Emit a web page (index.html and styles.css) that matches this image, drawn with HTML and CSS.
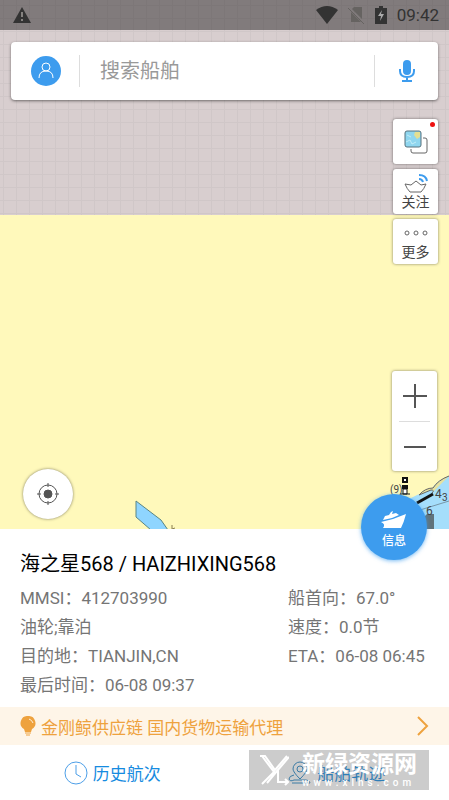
FILE: index.html
```html
<!DOCTYPE html>
<html lang="zh-CN">
<head>
    <meta charset="UTF-8">
    <meta name="viewport" content="width=device-width, initial-scale=1.0">
    <title>海之星568</title>
    <link rel="stylesheet" href="styles.css">
</head>
<body>
    <!-- Map Start -->
    <main class="map">
        <svg class="map-land river" width="40" height="29" viewBox="0 0 40 29">
            <path d="M1 1 L26 20 L33 30 H16 L1 17 Z" fill="#8fd5ff" stroke="#5a8583"/>
            <path d="M37 25 V29 L40 28" fill="none" stroke="#8a7f50"/>
        </svg>
        <svg class="map-land harbour" width="64" height="56" viewBox="0 0 64 56">
            <path d="M64 3 Q52 7 47 16 L32 22 L20 28 V56 H64 Z" fill="#a5defb"/>
            <path d="M64 3 Q53 7 48 15 Q40 15 34 22 L46 17 Q50 17 47 20" fill="#e6e2a0" stroke="#666"/>
            <path d="M32 30 L48 21" stroke="#111" stroke-width="3"/>
            <path d="M35 37 L64 28" stroke="#7797a8"/>
            <path d="M42 41 H49 V56 H35 V48 Z" fill="#60737b"/>
            <path d="M18 5 H22 V9 H18 Z" fill="#fff" stroke="#111" stroke-width="2"/>
            <path d="M17 12 H23 V16 H17 Z" fill="#111"/>
            <path d="M18 16 H22 V21 H18 Z M15 21 H25" fill="#fff" stroke="#111"/>
            <text x="5" y="20" class="depth">(9)</text>
            <text x="50" y="25" class="depth large">4</text>
            <text x="57" y="28" class="depth">3</text>
            <text x="41" y="42" class="depth large">6</text>
        </svg>

        <header class="status-bar">
            <svg width="20" height="18" viewBox="0 0 20 18">
                <path d="M10 1 L19 17 H1 Z" fill="#333"/>
                <path d="M10 6 V11 M10 13 V15" stroke="#858280" stroke-width="2"/>
            </svg>
            <div class="status-right">
                <svg width="22" height="18" viewBox="0 0 22 18">
                    <path d="M0 4 Q11 -4 22 4 L11 18 Z" fill="#333"/>
                </svg>
                <svg width="17" height="18" viewBox="0 0 17 18">
                    <path d="M6 1 H14 V13 L4 3 Z M3 6 L13 16 H3 Z" fill="#666361"/>
                    <path d="M0 2 L16 18" stroke="#666361" stroke-width="1"/>
                </svg>
                <svg width="12" height="18" viewBox="0 0 12 18">
                    <path d="M4 0 H8 V2 H12 V18 H0 V2 H4 Z" fill="#333"/>
                    <path d="M7 4 L3 10 H6 L5 15 L9 8 H6 Z" fill="#aaa"/>
                </svg>
                <span>09:42</span>
            </div>
        </header>

        <form class="search-box">
            <button type="button" class="avatar" aria-label="我的">
                <svg width="30" height="30" viewBox="0 0 30 30" fill="none" stroke="#fff">
                    <circle cx="15" cy="11" r="4"/>
                    <path d="M8 22 Q8 15 15 15 Q22 15 22 22"/>
                </svg>
            </button>
            <input type="text" aria-label="搜索船舶" placeholder="搜索船舶">
            <button type="button" class="voice" aria-label="语音搜索">
                <svg width="16" height="24" viewBox="0 0 16 24" fill="none" stroke="#3d9cee">
                    <rect x="4" y="1" width="8" height="15" rx="4" fill="#3d9cee" stroke="none"/>
                    <path d="M1 10 V12 Q1 18 8 18 Q15 18 15 12 V10 M8 18 V22 M3 22 H13" stroke-width="2"/>
                </svg>
            </button>
        </form>

        <nav class="side-tools">
            <button type="button" class="tool" aria-label="图层">
                <svg width="24" height="24" viewBox="0 0 24 24">
                    <path d="M19 8 H21 Q23 8 23 10 V21 Q23 23 21 23 H9 Q7 23 7 21 V19" fill="none" stroke="#666"/>
                    <rect x="1" y="1" width="16" height="16" rx="2" fill="#8fd6ef" stroke="#56717c"/>
                    <path d="M11 2 H16 V7 L13 9 L10 5 Z" fill="#e3df92"/>
                    <path d="M2 12 L6 10 L8 14 L12 12 M3 5 L7 7" fill="none" stroke="#c2edf8"/>
                </svg>
                <i class="dot"></i>
            </button>
            <button type="button" class="tool">
                <svg width="24" height="20" viewBox="0 0 24 20" fill="none" stroke="#666">
                    <path d="M1 11 L7 12 L12 8 L17 12 L22 11 Q20 16 17 19 H6 Q3 16 1 11 Z"/>
                    <path d="M15 6 Q18 6 19 9 M15 2 Q22 2 23 8" stroke="#3d9cee" stroke-width="2"/>
                </svg>
                <span>关注</span>
            </button>
            <button type="button" class="tool">
                <svg width="24" height="20" viewBox="0 0 24 20" fill="none" stroke="#666">
                    <circle cx="3" cy="10" r="2"/>
                    <circle cx="12" cy="10" r="2"/>
                    <circle cx="21" cy="10" r="2"/>
                </svg>
                <span>更多</span>
            </button>
        </nav>

        <div class="map-bottom">
            <button type="button" class="locate" aria-label="定位">
                <svg width="22" height="22" viewBox="0 0 22 22" fill="none" stroke="#555">
                    <circle cx="11" cy="11" r="9"/>
                    <circle cx="11" cy="11" r="4" fill="#555"/>
                    <path d="M11 0 V4 M11 18 V22 M0 11 H4 M18 11 H22"/>
                </svg>
            </button>
            <div class="zoom">
                <button type="button" aria-label="放大">
                    <svg width="24" height="24" viewBox="0 0 24 24"><path d="M0 12 H24 M12 0 V24" stroke="#555" stroke-width="2"/></svg>
                </button>
                <button type="button" aria-label="缩小">
                    <svg width="24" height="24" viewBox="0 0 24 24"><path d="M1 12 H23" stroke="#555" stroke-width="2"/></svg>
                </button>
            </div>
        </div>
    </main>
    <!-- Map End -->

    <!-- Ship panel Start -->
    <section class="panel">
        <button type="button" class="info-btn">
            <svg width="26" height="18" viewBox="0 0 26 18" fill="#fff">
                <path d="M0 11 L12 8 L25 3 Q23 11 20 17 H2 Q5 13 0 11 Z"/>
                <path d="M2 9 L4 5 L8 4 L10 1 L12 0 L11 3 L15 2 L18 4 L11 7 Z"/>
            </svg>
            <span>信息</span>
        </button>

        <h1>海之星568 / HAIZHIXING568</h1>
        <div class="details">
            <p>MMSI：412703990</p>
            <p>船首向：67.0°</p>
            <p>油轮;靠泊</p>
            <p>速度：0.0节</p>
            <p>目的地：TIANJIN,CN</p>
            <p>ETA：06-08 06:45</p>
            <p>最后时间：06-08 09:37</p>
        </div>

        <a class="notice" href="#">
            <svg width="16" height="20" viewBox="0 0 16 20">
                <path d="M8 0 A7 7 0 0 1 12 13 L11 16 H5 L4 13 A7 7 0 0 1 8 0 Z" fill="#eea23e"/>
                <path d="M5 17 H11 M6 19 H10" stroke="#eea23e"/>
                <path d="M9 3 Q12 4 13 7" fill="none" stroke="#fff0d8"/>
            </svg>
            <span>金刚鲸供应链 国内货物运输代理</span>
            <svg class="arrow" width="12" height="20" viewBox="0 0 12 20">
                <path d="M1 1 L10 10 L1 19" fill="none" stroke="#eea23e" stroke-width="2"/>
            </svg>
        </a>

        <nav class="tabs">
            <a href="#">
                <svg width="24" height="24" viewBox="0 0 24 24" fill="none" stroke="#4d9fe8">
                    <circle cx="12" cy="12" r="11"/>
                    <path d="M12 4 V13 L17 16"/>
                </svg>
                <span>历史航次</span>
            </a>
            <a href="#">
                <svg width="24" height="24" viewBox="0 0 24 24" fill="none" stroke="#2686c5">
                    <path d="M12 18 Q5 11 5 8 A7 7 0 0 1 19 8 Q19 11 12 18 Z"/>
                    <circle cx="12" cy="8" r="3"/>
                    <path d="M6 14 Q1 15 1 18 Q2 21 6 19 H18 Q22 19 22 22 H4"/>
                </svg>
                <span>船舶轨迹</span>
            </a>
        </nav>

        <div class="watermark">
            <svg width="30" height="32" viewBox="0 0 30 32" fill="none" stroke="#fff">
                <path d="M1 2 H6 L16 16 L28 2 M3 2 L15 18 L3 30 M30 3 L18 17 L8 29 M19 16 V28 H29 M26 25 L29 28 L26 31" stroke-width="2"/>
            </svg>
            <div>
                <strong>新绿资源网</strong>
                <small>www.xlhs.com</small>
            </div>
        </div>
    </section>
    <!-- Ship panel End -->
</body>
</html>
```

FILE: styles.css
```css
* {
    box-sizing: border-box;
    margin: 0;
    padding: 0;
    font-family: Roboto, "Noto Sans CJK SC", sans-serif;
}

body {
    display: flex;
    flex-direction: column;
    min-height: 100vh;
    background-color: #ffffff;
}

svg {
    display: block;
    flex-shrink: 0;
}

button {
    border: none;
    background: none;
    cursor: pointer;
}

a {
    text-decoration: none;
}

.map {
    flex: 1;
    display: flex;
    flex-direction: column;
    position: relative;
    background:
        linear-gradient(transparent 215px, #fff9bb 215px),
        repeating-linear-gradient(90deg, transparent 0 3px, #d0c7c8 3px 4px, transparent 4px 13px),
        repeating-linear-gradient(transparent 0 5px, #d0c7c8 5px 6px, transparent 6px 13px);
    background-color: #d8cecf;
}

.map-land {
    position: absolute;
    bottom: 0;
}

.river {
    left: 30%;
}

.harbour {
    right: 0;
}

.depth {
    font-size: 10px;
    fill: #444444;
}

.large {
    font-size: 12px;
}

.status-bar {
    display: flex;
    justify-content: space-between;
    align-items: center;
    height: 30px;
    padding: 0 10px 0 12px;
    background-color: rgba(0, 0, 0, 0.4);
}

.status-right {
    display: flex;
    align-items: center;
    gap: 10px;
    font-size: 17px;
    color: #333333;
}

.search-box {
    display: flex;
    align-items: center;
    height: 58px;
    margin: 12px 11px 0;
    padding: 0 0 0 20px;
    background-color: #ffffff;
    border-radius: 4px;
    box-shadow: 0 1px 3px rgba(0, 0, 0, 0.5);
}

.avatar {
    width: 30px;
    height: 30px;
    background-color: #3d9cee;
    border-radius: 50%;
}

.search-box input {
    flex: 1;
    min-width: 0;
    height: 32px;
    margin-left: 18px;
    padding-left: 20px;
    border: none;
    border-left: 1px solid #dddddd;
    outline: none;
    font-size: 20px;
}

.search-box input::placeholder {
    color: #999999;
}

.voice {
    display: flex;
    justify-content: center;
    align-items: center;
    width: 64px;
    height: 32px;
    border-left: 1px solid #dddddd;
}

.side-tools {
    display: flex;
    flex-direction: column;
    align-self: flex-end;
    gap: 5px;
    margin: 19px 11px 0 0;
}

.tool {
    display: flex;
    flex-direction: column;
    justify-content: center;
    align-items: center;
    position: relative;
    width: 45px;
    height: 45px;
    background-color: #ffffff;
    border-radius: 3px;
    box-shadow: 0 0 3px rgba(0, 0, 0, 0.5);
    font-size: 14px;
    line-height: 18px;
    color: #444444;
}

.dot {
    position: absolute;
    top: 3px;
    right: 3px;
    width: 5px;
    height: 5px;
    border-radius: 50%;
    background-color: #ee1111;
}

.map-bottom {
    display: flex;
    justify-content: space-between;
    align-items: flex-end;
    margin-top: auto;
    padding: 0 12px 10px 23px;
}

.locate {
    display: flex;
    justify-content: center;
    align-items: center;
    width: 50px;
    height: 50px;
    border-radius: 50%;
    background-color: #ffffff;
    box-shadow: 0 0 3px rgba(0, 0, 0, 0.5);
}

.zoom {
    display: flex;
    flex-direction: column;
    width: 45px;
    margin-bottom: 48px;
    padding: 0 7px;
    background-color: #ffffff;
    border-radius: 3px;
    box-shadow: 0 0 3px rgba(0, 0, 0, 0.5);
}

.zoom button {
    display: flex;
    justify-content: center;
    align-items: center;
    height: 50px;
}

.zoom button + button {
    border-top: 1px solid #dddddd;
}

.panel {
    position: relative;
    padding-top: 20px;
}

.info-btn {
    display: flex;
    flex-direction: column;
    justify-content: center;
    align-items: center;
    gap: 3px;
    position: absolute;
    top: -35px;
    right: 22px;
    width: 66px;
    height: 66px;
    padding-top: 6px;
    border-radius: 50%;
    background-color: #3d9cee;
    box-shadow: 0 1px 4px rgba(61, 156, 238, 0.7);
    font-size: 12px;
    font-weight: 500;
    line-height: 18px;
    color: #ffffff;
}

h1 {
    padding: 0 20px;
    font-size: 20px;
    font-weight: 400;
    line-height: 30px;
    color: #000000;
}

.details {
    display: grid;
    grid-template-columns: 19fr 10fr;
    padding: 5px 20px 7px;
    font-size: 17px;
    line-height: 29px;
    color: #757575;
    white-space: nowrap;
}

.notice {
    display: flex;
    align-items: center;
    gap: 5px;
    height: 38px;
    padding: 0 20px;
    background-color: #fef5e8;
    font-size: 17px;
    color: #eea23e;
}

.arrow {
    margin-left: auto;
}

.tabs {
    display: flex;
    height: 55px;
}

.tabs a {
    display: flex;
    flex: 1;
    justify-content: center;
    align-items: center;
    gap: 5px;
    font-size: 17px;
    color: #168be0;
}

.watermark {
    display: flex;
    align-items: center;
    gap: 13px;
    position: absolute;
    right: 20px;
    bottom: 10px;
    width: 180px;
    height: 40px;
    padding-left: 10px;
    background-color: rgba(100, 100, 100, 0.33);
    color: #ffffff;
}

.watermark strong,
.watermark small {
    display: block;
}

.watermark strong {
    font-size: 23px;
    line-height: 26px;
}

.watermark small {
    font-size: 10px;
    font-weight: 500;
    line-height: 10px;
    letter-spacing: 4px;
}
```
